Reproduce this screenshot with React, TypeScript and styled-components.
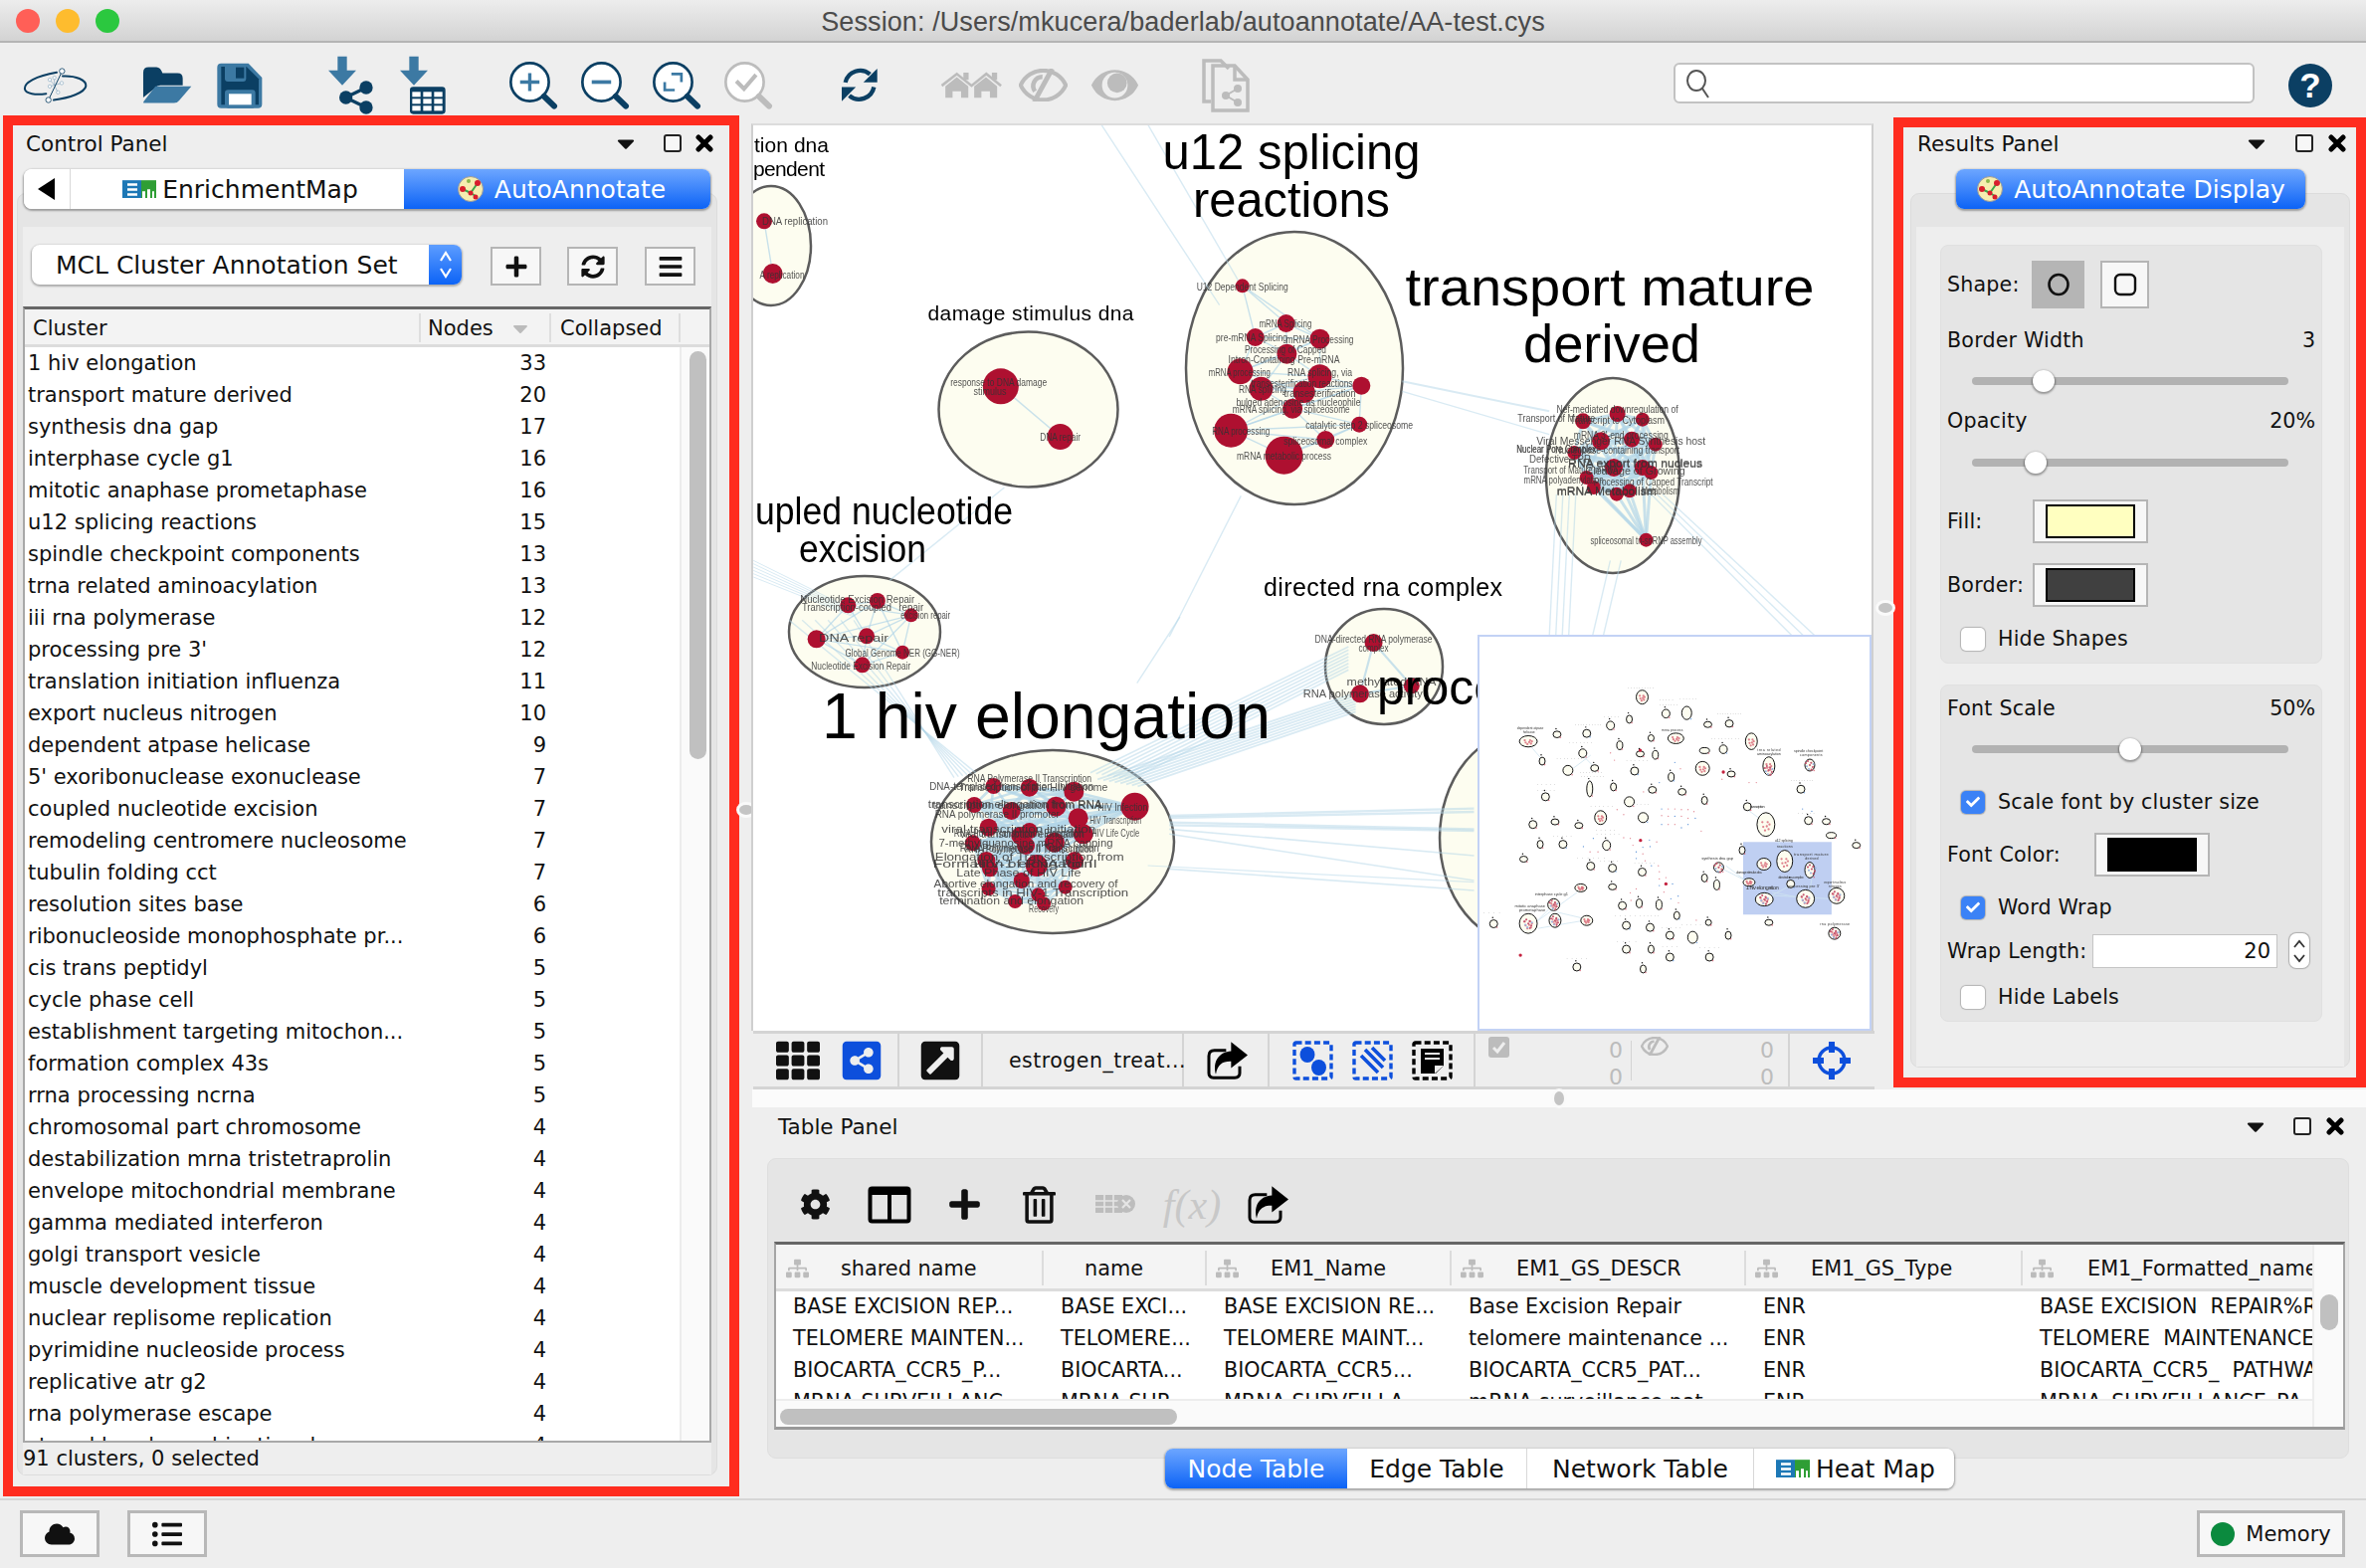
import React from "react";
import styled, { createGlobalStyle } from "styled-components";
import {
  FaCog, FaPlus, FaRegTrashAlt, FaSyncAlt, FaBars,
  FaCloud, FaListUl, FaTh, FaShareAltSquare, FaExternalLinkSquareAlt, FaSitemap, FaCaretDown, FaCheck,
} from "react-icons/fa";

const UI = '"DejaVu Sans", "Noto Sans", sans-serif';
const DARK = "#0b3f63";
const MID = "#3c79a3";
const GRAY = "#bcbcbc";
const BLUE = "#0d4fdc";

const Global = createGlobalStyle`
  html, body { margin: 0; padding: 0; background: #eeeeee; }
  body { font-family: ${UI}; color: #111; }
  * { box-sizing: border-box; }
`;

const Win = styled.div`
  width: 2378px; height: 1576px; display: flex; flex-direction: column;
  background: #eeeeee; overflow: hidden; font-size: 21px;
`;
const TitleBar = styled.div`
  height: 43px; flex: none; display: flex; align-items: center; position: relative;
  padding-left: 16px; gap: 16px;
  background: linear-gradient(#ededed, #d3d3d3); border-bottom: 2px solid #b4b4b4;
`;
const Light = styled.span<{ $c: string }>`
  width: 24px; height: 24px; border-radius: 50%; background: ${(p) => p.$c}; flex: none;
`;
const TitleText = styled.div`
  position: absolute; left: 0; right: 0; top: 7px; text-align: center;
  font: 27px "Liberation Sans", sans-serif; color: #4b4b4b; letter-spacing: 0.1px;
`;
const Toolbar = styled.div`
  height: 73px; flex: none; display: flex; align-items: center; padding-top: 12px;
`;
const ToolSlot = styled.div<{ $ml: number }>`
  margin-left: ${(p) => p.$ml}px; display: flex; align-items: center; flex: none;
`;
const SearchBox = styled.div`
  margin-left: 425px; width: 584px; height: 41px; background: #fff; border: 2px solid #c2c2c2;
  border-radius: 6px; display: flex; align-items: center; padding-left: 10px; margin-top: -4px;
`;
const HelpBadge = styled.div`
  margin-left: 34px; width: 44px; height: 44px; border-radius: 50%; background: ${DARK}; color: #fff;
  font: bold 35px "Liberation Sans", sans-serif; display: flex; align-items: center; justify-content: center;
`;

const Main = styled.div`
  height: 1390px; flex: none; display: flex;
`;
const RedFrame = styled.section<{ $w: number; $h: number; $mt: number; $ml: number }>`
  width: ${(p) => p.$w}px; height: ${(p) => p.$h}px; margin-top: ${(p) => p.$mt}px; margin-left: ${(p) => p.$ml}px;
  border: 10px solid #ff2c1f; flex: none; display: flex; flex-direction: column; background: #eeeeee;
`;
const PanelHead = styled.div<{ $h: number; $pl: number; $pr: number }>`
  height: ${(p) => p.$h}px; padding: 0 ${(p) => p.$pr}px 0 ${(p) => p.$pl}px; display: flex; align-items: center; flex: none;
`;
const PanelTitle = styled.span`
  font-size: 21.5px; margin-right: auto; white-space: nowrap;
`;
const HeadBtn = styled.span<{ $ml: number }>`
  margin-left: ${(p) => p.$ml}px; display: flex; align-items: center; justify-content: center; flex: none;
`;
const SquareGlyph = styled.span`
  width: 18px; height: 18px; border: 2px solid #222; border-radius: 3px; background: #f7f7f7;
`;
const Segments = styled.div<{ $w: number; $ml: number; $mt: number }>`
  position: relative; z-index: 1; flex: none; display: flex;
  width: ${(p) => p.$w}px; height: 40px; margin: ${(p) => p.$mt}px 0 -16px ${(p) => p.$ml}px;
  border-radius: 8px; background: #fff; overflow: hidden; box-shadow: 0 1px 2px 1px rgba(0, 0, 0, 0.32);
`;
const Segment = styled.div<{ $w: number; $on?: boolean; $line?: boolean; $gap?: number; $pl?: number }>`
  width: ${(p) => p.$w}px; flex: none; display: flex; align-items: center; justify-content: center; gap: ${(p) => p.$gap ?? 6}px;
  padding-left: ${(p) => p.$pl ?? 0}px; font-size: 25px; white-space: nowrap;
  color: ${(p) => (p.$on ? "#fff" : "#111")};
  background: ${(p) => (p.$on ? "linear-gradient(#6da6ff, #0c63f6)" : "#fff")};
  border-right: ${(p) => (p.$line ? "1px solid #d8d8d8" : "none")};
`;
const OuterBox = styled.div<{ $ml: number; $w: number; $h: number }>`
  margin-left: ${(p) => p.$ml}px; width: ${(p) => p.$w}px; height: ${(p) => p.$h}px; flex: none;
  background: #e5e5e5; border: 1px solid #dcdcdc; border-radius: 9px; padding: 33px 5px 0 5px;
`;
const InnerLight = styled.div`
  height: 100%; background: #eeeeee; display: flex; flex-direction: column;
`;
const ComboRow = styled.div`
  height: 80px; flex: none; padding: 18px 0 0 9px; display: flex; align-items: flex-start;
`;
const Combo = styled.div`
  width: 432px; height: 40px; border-radius: 8px; background: #fff; display: flex; overflow: hidden; flex: none;
  box-shadow: 0 1px 2px 1px rgba(0, 0, 0, 0.28); font-size: 25px;
`;
const ComboText = styled.div`
  flex: 1; padding-left: 24px; display: flex; align-items: center; white-space: nowrap;
`;
const ComboArrows = styled.div`
  width: 33px; background: linear-gradient(#5d9dff, #0c63f6); display: flex; align-items: center; justify-content: center;
`;
const SmallBtn = styled.div<{ $ml: number }>`
  margin: 2px 0 0 ${(p) => p.$ml}px; width: 51px; height: 39px; background: #f7f7f7; border: 2px solid #b5b5b5;
  display: flex; align-items: center; justify-content: center; flex: none;
`;
const ClusterTable = styled.div`
  height: 1142px; flex: none; display: flex; flex-direction: column; background: #fff;
  border: 2px solid #a8a8a8; border-top: 3px solid #666;
`;
const ClusterHead = styled.div`
  height: 38px; flex: none; display: flex; background: #f3f3f3; border-bottom: 3px solid #dcdcdc;
`;
const HeadCell = styled.div<{ $w: number; $line?: boolean; $pl: number }>`
  width: ${(p) => p.$w}px; flex: none; display: flex; align-items: center; padding-left: ${(p) => p.$pl}px; gap: 15px; font-size: 21px;
  margin: 4px 0 2px; border-right: ${(p) => (p.$line ? "2px solid #dedede" : "none")};
`;
const ClusterBody = styled.div`
  flex: 1; display: flex; overflow: hidden;
`;
const ClusterRows = styled.div`
  width: 658px; flex: none; overflow: hidden;
`;
const ClusterRow = styled.div`
  height: 32px; display: flex; align-items: center; white-space: nowrap;
`;
const ClusterName = styled.span`
  width: 470px; padding-left: 3px; flex: none; overflow: hidden;
`;
const ClusterCount = styled.span`
  width: 54px; text-align: right; flex: none;
`;
const VScrollTrack = styled.div`
  flex: 1; background: #fafafa; border-left: 2px solid #ececec; padding: 4px 0 0 8px;
`;
const VThumb = styled.div<{ $w: number; $h: number }>`
  width: ${(p) => p.$w}px; height: ${(p) => p.$h}px; background: #c0c0c0; border-radius: 9px;
`;
const Footnote = styled.div`
  flex: 1; display: flex; align-items: center; padding-left: 0;
`;

const Center = styled.div`
  width: 1160px; flex: none; padding: 8px 20px 0 12px; position: relative; display: flex; flex-direction: column;
`;
const CanvasBox = styled.div`
  height: 912px; flex: none; position: relative; overflow: hidden; background: #fff;
  border-top: 2px solid #dcdcdc; border-left: 2px solid #cfcfcf; border-right: 2px solid #cfcfcf;
`;
const Minimap = styled.div`
  position: absolute; right: 0; bottom: 0; width: 396px; height: 398px; background: #fff; border: 2px solid #c3d2f5;
`;
const SplitDot = styled.div<{ $x: number; $y: number; $wide?: boolean }>`
  position: absolute; left: ${(p) => p.$x}px; top: ${(p) => p.$y}px;
  width: ${(p) => (p.$wide ? 10 : 14)}px; height: ${(p) => (p.$wide ? 14 : 10)}px; border-radius: 50%;
  background: #c4c4c4; box-shadow: 0 0 0 3px #fafafa;
`;
const NetBar = styled.div`
  height: 59px; flex: none; display: flex; margin-left: 2px; width: 1127px;
  border-top: 3px solid #d4d4d4; border-bottom: 3px solid #d4d4d4;
`;
const NetSection = styled.div<{ $w: number; $pl: number; $line?: boolean; $gap?: number }>`
  width: ${(p) => p.$w}px; flex: none; display: flex; align-items: center; padding-left: ${(p) => p.$pl}px;
  gap: ${(p) => p.$gap ?? 0}px; border-right: ${(p) => (p.$line ? "2px solid #d4d4d4" : "none")}; white-space: nowrap;
`;
const NetName = styled.span`
  font-size: 20.5px; letter-spacing: 0.5px;
`;
const CountCol = styled.div`
  display: flex; flex-direction: column; width: 28px; margin-left: auto; color: ${GRAY}; font-size: 22px;
  line-height: 27px; text-align: right;
`;
const ThinDivider = styled.span`
  width: 1px; height: 40px; background: #d4d4d4; margin: 0 9px 0 8px; flex: none;
`;
const TopStack = styled.div`
  display: flex; flex: none; height: 979px; margin: 0;
`;
const RightArea = styled.div`
  width: 1635px; flex: none; display: flex; flex-direction: column;
`;
const StatCell = styled.div<{ $w: number }>`
  display: flex; align-items: flex-start; width: ${(p) => p.$w}px; align-self: stretch; padding-top: 3px;
`;
const Strip = styled.div`
  height: 18px; flex: none; margin-left: 13px; background: #fbfbfb; position: relative;
`;
const ResultsInnerPad = styled.div`
  padding: 18px 0 0 24px; height: 100%;
`;
const Group = styled.div<{ $h: number; $mt?: number; $pt: number }>`
  width: 384px; height: ${(p) => p.$h}px; margin-top: ${(p) => p.$mt ?? 0}px; padding: ${(p) => p.$pt}px 6px 0 6px;
  background: #e5e5e5; border-radius: 8px; border: 1px solid #e0e0e0; display: flex; flex-direction: column;
`;
const Row = styled.div<{ $h: number; $mt?: number }>`
  height: ${(p) => p.$h}px; margin-top: ${(p) => p.$mt ?? 0}px; flex: none; display: flex; align-items: center; white-space: nowrap;
`;
const RowLabel = styled.span<{ $w?: number }>`
  width: ${(p) => (p.$w ? `${p.$w}px` : "auto")}; flex: none; letter-spacing: 0.2px; font-size: 20.6px;
`;
const RowValue = styled.span`
  margin-left: auto; font-size: 20.6px;
`;
const ShapeBtn = styled.div<{ $on?: boolean; $ml?: number; $w: number }>`
  width: ${(p) => p.$w}px; height: 48px; margin-left: ${(p) => p.$ml ?? 0}px; flex: none; display: flex; align-items: center; justify-content: center;
  background: ${(p) => (p.$on ? "#b5b5b5" : "#f7f7f7")}; border: ${(p) => (p.$on ? "none" : "2px solid #b5b5b5")};
`;
const SliderTrack = styled.div`
  width: 318px; height: 8px; margin-left: 25px; background: #b2b2b2; border-radius: 4px; position: relative;
`;
const SliderThumb = styled.div<{ $pct: number }>`
  position: absolute; left: ${(p) => p.$pct}%; top: -7px; width: 22px; height: 22px; margin-left: -11px; border-radius: 50%;
  background: #fff; box-shadow: 0 1px 2px 1px rgba(0, 0, 0, 0.35);
`;
const ColorBtn = styled.div`
  width: 116px; height: 44px; background: #f7f7f7; border: 2px solid #b5b5b5; display: flex; align-items: center; justify-content: center; flex: none;
`;
const Swatch = styled.div<{ $c: string; $ring?: boolean }>`
  width: 90px; height: 34px; background: ${(p) => p.$c}; border: ${(p) => (p.$ring ? "2px solid #000" : "none")};
`;
const Check = styled.div<{ $on?: boolean }>`
  width: 24px; height: 23px; margin: 0 13px 0 14px; border-radius: 5px; flex: none; display: flex; align-items: center; justify-content: center;
  background: ${(p) => (p.$on ? "#3b82f6" : "#fff")}; box-shadow: 0 0 1px 1px rgba(0, 0, 0, 0.22);
`;
const WrapInput = styled.div`
  width: 186px; height: 34px; margin-left: 5px; background: #fff; border: 1px solid #c4c4c4; text-align: right;
  padding-right: 6px; line-height: 32px; flex: none;
`;
const Spinner = styled.div`
  width: 20px; height: 35px; margin-left: 12px; background: #fff; border-radius: 7px; flex: none;
  box-shadow: 0 0 1px 1px rgba(0, 0, 0, 0.25); display: flex; align-items: center; justify-content: center;
`;

const TablePanel = styled.div`
  height: 393px; flex: none; padding-left: 28px;
`;
const TableBox = styled.div`
  width: 1590px; height: 302px; margin-top: 13px; background: #e5e5e5; border: 1px solid #dedede; border-radius: 9px;
  padding: 0 3px 0 6px; display: flex; flex-direction: column;
`;
const TableTools = styled.div`
  height: 83px; flex: none; display: flex; align-items: center; padding-top: 8px;
`;
const DataTable = styled.div`
  height: 189px; flex: none; background: #fff; border: 2px solid #a5a5a5; border-top: 3px solid #666; border-bottom: 3px solid #999;
  display: flex;
`;
const DataMain = styled.div`
  width: 1544px; flex: none; display: flex; flex-direction: column; overflow: hidden;
`;
const DataHead = styled.div`
  height: 47px; flex: none; display: flex; background: #f4f4f4; border-bottom: 3px solid #dcdcdc; padding: 6px 0 3px;
`;
const DataHeadCell = styled.div<{ $w: number; $pl: number; $line?: boolean }>`
  width: ${(p) => p.$w}px; flex: none; display: flex; align-items: center; position: relative; padding-left: ${(p) => p.$pl}px;
  white-space: nowrap; overflow: hidden; font-size: 20.8px; border-right: ${(p) => (p.$line ? "2px solid #dcdcdc" : "none")};
`;
const IconAt = styled.span<{ $x: number }>`
  position: absolute; left: ${(p) => p.$x}px; top: 50%; transform: translateY(-50%); display: flex;
`;
const DataRows = styled.div`
  height: 109px; flex: none; overflow: hidden; margin-top: -1px;
`;
const DataRow = styled.div`
  height: 32px; display: flex;
`;
const DataCell = styled.div<{ $w: number }>`
  width: ${(p) => p.$w}px; flex: none; padding-left: 17px; display: flex; align-items: center; white-space: pre; overflow: hidden; font-size: 20.7px;
`;
const HScroll = styled.div`
  flex: 1; background: #fafafa; padding: 8px 0 0 4px; border-top: 2px solid #ededed;
`;
const HThumb = styled.div`
  width: 399px; height: 16px; background: #c0c0c0; border-radius: 8px;
`;
const DataSide = styled.div`
  flex: 1; background: #fafafa; border-left: 2px solid #ededed; padding: 50px 0 0 6px;
`;
const TableTabs = styled.div`
  width: 793px; height: 40px; margin: 19px 0 0 393px; display: flex; flex: none; position: relative; z-index: 1; background: #fff;
  border-radius: 8px; overflow: hidden; box-shadow: 0 1px 2px 1px rgba(0, 0, 0, 0.3);
`;
const BottomBar = styled.div`
  height: 70px; flex: none; display: flex; align-items: flex-start; padding: 10px 21px 0 20px; border-top: 2px solid #d6d6d6;
`;
const FootBtn = styled.div<{ $ml?: number; $w: number }>`
  width: ${(p) => p.$w}px; height: 47px; margin-left: ${(p) => p.$ml ?? 0}px; flex: none; background: #f7f7f7; border: 3px solid #b8b8b8;
  display: flex; align-items: center; justify-content: center; gap: 11px; font-size: 21px;
`;
const GreenDot = styled.span`
  width: 24px; height: 24px; border-radius: 50%; background: #0b8a3e;
`;
const Spacer = styled.div`
  flex: 1;
`;
const SoftSvg = styled.svg`
  display: block; filter: blur(0.45px);
`;

/* ---------- toolbar drawings ---------- */
const Logo = () => (
  <svg width="65" height="37" viewBox="70 70 195 110">
    <path d="M172 87C110 98 72 118 76 138c3 13 32 18 64 13" fill="none" stroke={DARK} strokeWidth="6" strokeLinecap="round" />
    <path d="M190 98c40-2 72 12 70 30-3 20-50 36-97 42" fill="none" stroke={DARK} strokeWidth="6" strokeLinecap="round" />
    <g stroke="#6f97b3" strokeWidth="1.6" fill="#fff">
      <path d="M165 125l-14-16M165 125l-14 4M165 125l22-6M165 125l10 22M165 125l0-22" fill="none" />
      <circle cx="151" cy="109" r="5" /><circle cx="151" cy="129" r="5" /><circle cx="187" cy="119" r="5" />
      <circle cx="176" cy="147" r="5" /><circle cx="165" cy="103" r="5" />
    </g>
    <path d="M188 84L147 170" stroke={DARK} strokeWidth="3" />
    <circle cx="188" cy="83" r="8" fill="#fff" stroke={DARK} strokeWidth="2.5" />
    <circle cx="147" cy="170" r="8" fill="#fff" stroke={DARK} strokeWidth="2.5" />
  </svg>
);
const Folder = () => (
  <svg width="50" height="39" viewBox="425 66 155 120">
    <path d="M428 87q0-17 17-17h24q13 0 19 19h47q16 0 16 16v22h-70q-10 0-17 9l-36 29z" fill={DARK} />
    <path d="M466 130h112l-38 44q-6 8-16 8h-92q-6 0-2-6z" fill={MID} />
  </svg>
);
const Save = () => (
  <svg width="46" height="46" viewBox="652 58 138 138">
    <path d="M665 60h82l41 43v80q0 12-12 12H665q-12 0-12-12V72q0-12 12-12z" fill={MID} />
    <path d="M665 70h76l37 37v78H665z" fill={DARK} />
    <path d="M676 70h64v36q0 9-9 9h-46q-9 0-9-9z" fill={MID} />
    <rect x="709" y="72" width="25" height="33" fill={DARK} />
    <rect x="676" y="140" width="92" height="55" rx="10" fill={MID} />
    <rect x="688" y="152" width="68" height="33" fill="#fff" />
  </svg>
);
const ImportArrow = ({ x }: { x: number }) => (
  <path d={`M${x - 14} 40h28v42h28l-42 45-42-45h28z`} fill={MID} />
);
const ImportNet = () => (
  <svg width="47" height="60" viewBox="985 38 141 180">
    <ImportArrow x={1030} />
    <path d="M1102 134L1040 164L1102 194" fill="none" stroke={DARK} strokeWidth="10" />
    <circle cx="1102" cy="134" r="20" fill={DARK} /><circle cx="1041" cy="164" r="20" fill={DARK} /><circle cx="1102" cy="194" r="20" fill={DARK} />
  </svg>
);
const ImportTbl = () => (
  <svg width="47" height="60" viewBox="1200 38 141 180">
    <ImportArrow x={1245} />
    <rect x="1233" y="132" width="107" height="82" rx="10" fill={DARK} />
    {[0, 1, 2].flatMap((r) => [0, 1, 2].map((c) => (
      <rect key={`${r}${c}`} x={1240 + c * 33} y={147 + r * 21} width="25" height="15" fill="#fff" />
    )))}
  </svg>
);
const Lens = ({ c, kind }: { c: string; kind: string }) => {
  const inner = kind === "check" ? "#bcbcbc" : MID;
  return (
    <svg width="52" height="52" viewBox="30 48 155 155">
      <circle cx="97" cy="115" r="57" fill="#fff" stroke={c} strokeWidth="8" />
      <path d="M140 158L170 187" stroke={c} strokeWidth="18" strokeLinecap="round" />
      {kind === "plus" && <path d="M68 115h58M97 88v54" stroke={inner} strokeWidth="10" />}
      {kind === "minus" && <path d="M68 115h58" stroke={inner} strokeWidth="11" />}
      {kind === "fit" && <path d="M92 91h30v24M102 139H72v-24" fill="none" stroke={inner} strokeWidth="8" />}
      {kind === "check" && <path d="M72 112l23 23 36-42" fill="none" stroke={inner} strokeWidth="12" />}
    </svg>
  );
};
const Refresh = () => (
  <svg width="38" height="37" viewBox="1035 70 115 112">
    <path d="M1049 118A46 46 0 0 1 1124 93" fill="none" stroke={DARK} strokeWidth="13" />
    <path d="M1146 76v42h-42z" fill={DARK} />
    <path d="M1136 132A46 46 0 0 1 1061 158" fill="none" stroke={DARK} strokeWidth="13" />
    <path d="M1038 175v-43h43z" fill={DARK} />
  </svg>
);
const Houses = () => (
  <svg width="63" height="27" viewBox="1335 85 190 82">
    <path d="M1339 128L1385 92L1430 128L1475 92L1520 128" fill="none" stroke={GRAY} strokeWidth="8" />
    <path d="M1350 130l35-28 35 28v35h-22v-20h-26v20h-22zM1438 130l36-28 34 28v35h-22v-20h-26v20h-22z" fill={GRAY} />
    <rect x="1405" y="88" width="16" height="22" fill={GRAY} /><rect x="1492" y="88" width="16" height="22" fill={GRAY} />
  </svg>
);
const Eye = ({ size = 49, slash, c = GRAY }: { size?: number; slash?: boolean; c?: string }) => (
  <svg width={size} height={size * 0.68} viewBox="0 0 64 44">
    <path d="M2 22C14 -4 50 -4 62 22C50 48 14 48 2 22z" fill={slash ? "none" : c} stroke={c} strokeWidth={slash ? 5.5 : 2} />
    {!slash && <circle cx="32" cy="22" r="17" fill="#eee" />}
    {!slash && <circle cx="35" cy="19" r="13" fill={c} />}
    {slash && <path d="M20 44L44 0" stroke={c} strokeWidth="6.5" />}
    {slash && <path d="M31 11a12 12 0 0 0-10 19" fill="none" stroke={c} strokeWidth="6" />}
  </svg>
);
const DocShare = () => (
  <svg width="50" height="55" viewBox="0 0 50 55" fill="none" stroke={GRAY} strokeWidth="3.5">
    <path d="M10 44H3V3h17l8 8" />
    <path d="M12 8h22l13 14v31H12z" /><path d="M34 8v14h13" />
    <g fill={GRAY} stroke="none"><circle cx="37" cy="31" r="4" /><circle cx="25" cy="38" r="4" /><circle cx="37" cy="45" r="4" /></g>
    <path d="M37 31l-12 7 12 7" strokeWidth="2" />
  </svg>
);
const SearchGlyph = () => (
  <svg width="26" height="32" viewBox="0 0 26 32" fill="none" stroke="#555" strokeWidth="2">
    <ellipse cx="11" cy="13" rx="9" ry="10" /><path d="M17 21l6 9" />
  </svg>
);
const ExportIcon = () => (
  <svg width="41" height="38" viewBox="1362 18 123 113">
    <path d="M1420 44H1385q-17 0-17 17v51q0 14 14 14h64q15 0 15-14V92" fill="none" stroke="#000" strokeWidth="9" />
    <path d="M1435 18L1485 58L1435 97V77C1410 76 1394 86 1389 116C1378 76 1400 48 1435 46z" fill="#000" />
  </svg>
);
const ColumnsIcon = () => (
  <svg width="44" height="38" viewBox="0 0 44 38" fill="none" stroke="#000">
    <rect x="2.5" y="2.5" width="39" height="33" rx="2" strokeWidth="4" />
    <path d="M2 6h40" strokeWidth="6" /><path d="M22 4v32" strokeWidth="4" />
  </svg>
);
const CloseGlyph = () => (
  <svg width="18" height="18" viewBox="0 0 18 18"><path d="M3 3L15 15M15 3L3 15" stroke="#000" strokeWidth="5" strokeLinecap="round" /></svg>
);

/* ---------- small product marks ---------- */
const EmMark = ({ w = 34 }: { w?: number }) => (
  <svg width={w} height={w * 0.54} viewBox="0 0 34 18">
    <rect width="19" height="18" fill="#1d78b6" /><rect x="19" width="15" height="18" fill="#2f9e35" />
    <path d="M5 3h10v2.5H5zM5 8h10v2.5H5zM5 13h10v2.5H5z" fill="#fff" />
    <path d="M20 11h3v7h-3zM25 9h3v9h-3zM30 11h2v7h-2z" fill="#fff" />
  </svg>
);
const AaMark = () => (
  <svg width="28" height="28" viewBox="0 0 28 28">
    <circle cx="14" cy="14" r="12.5" fill="#f6edb0" stroke="#999" />
    <path d="M6 14L14 18L21 8M14 18L19 21" stroke="#3aa84a" strokeWidth="2" fill="none" />
    <circle cx="6" cy="14" r="3" fill="#d81e2c" /><circle cx="21" cy="8" r="3" fill="#d81e2c" />
    <circle cx="14" cy="18" r="2.5" fill="#d81e2c" /><circle cx="19" cy="22" r="2.5" fill="#d81e2c" /><circle cx="12" cy="6" r="2" fill="#8bb84a" />
  </svg>
);
const WindowControls = ({ a, b, c }: { a: number; b: number; c: number }) => (
  <>
    <HeadBtn $ml={a}><FaCaretDown size={28} color="#111" style={{ margin: "-2px -6px" }} /></HeadBtn>
    <HeadBtn $ml={b}><SquareGlyph /></HeadBtn>
    <HeadBtn $ml={c}><CloseGlyph /></HeadBtn>
  </>
);

/* ---------- network drawing ---------- */
const z4 = (x: number, y: number): [number, number] => [x / 1.3876 + 750, y / 3 + 120];
const z5 = (x: number, y: number): [number, number] => [x / 1.3876 + 750, y / 3 + 620];

const clusters: number[][] = [
  [775, 247, 40, 60], [1033.5, 411.5, 90, 78], [1301, 370, 109, 137], [1621, 478, 67, 98],
  [869, 635, 76, 56], [1391, 670, 59, 58], [1058, 846, 122, 92], [1535, 842, 88, 108],
];
const n4: number[][] = [
  [25, 307, 8], [37, 465, 10], [355, 805, 18], [438, 957, 13],
  [692, 502, 7], [753, 615, 9], [710, 657, 9], [800, 662, 10], [754, 707, 10], [689, 760, 13], [800, 775, 12],
  [718, 812, 12], [778, 822, 11], [858, 803, 9], [762, 872, 10], [676, 938, 17], [855, 920, 8], [808, 966, 9], [750, 1013, 19],
  [1167, 910, 8], [1215, 888, 8], [1250, 905, 7], [1192, 970, 9], [1235, 965, 8], [1268, 980, 7], [1155, 1005, 7], [1210, 1050, 9],
  [1250, 1050, 8], [1262, 1065, 7], [1172, 1080, 7], [1182, 1110, 7], [1214, 1130, 7], [1232, 1120, 7], [1255, 1268, 7],
  [142, 1465, 8], [183, 1452, 8], [230, 1495, 7],
];
const n5: number[][] = [
  [98, 67, 9], [168, 58, 8], [218, 107, 7], [162, 145, 8], [875, 78, 9], [928, 208, 8], [856, 232, 9],
  [345, 510, 8], [395, 515, 9], [457, 527, 10], [318, 567, 8], [432, 572, 10], [370, 585, 9], [542, 572, 14], [463, 607, 10],
  [338, 635, 9], [395, 645, 8], [382, 660, 9], [470, 655, 10], [430, 680, 10], [390, 690, 9], [316, 682, 8], [335, 735, 9],
  [405, 750, 11], [458, 735, 9], [340, 760, 8], [384, 795, 8], [338, 820, 7], [445, 815, 7], [407, 838, 7], [375, 858, 7], [415, 865, 7],
];
const allNodes = [
  ...n4.map((n) => [...z4(n[0], n[1]), n[2]]),
  ...n5.map((n) => [...z5(n[0], n[1]), n[2]]),
];
type Lab = [number, number, string, number];
const labs4: Lab[] = [
  [68, 307, "DNA replication", 66], [50, 467, "A replication", 45],
  [352, 792, "response to DNA damage", 97], [340, 820, "stimulus", 33], [438, 957, "DNA repair", 41],
  [692, 505, "U12 Dependent Splicing", 92], [752, 615, "mRNA Splicing", 53], [705, 657, "pre-mRNA Splicing", 72], [800, 663, "mRNA Processing", 68],
  [752, 693, "Processing of Capped", 82], [750, 722, "Intron-Containing Pre-mRNA", 112], [688, 762, "mRNA processing", 62], [800, 762, "RNA splicing, via", 65],
  [775, 795, "transesterification reactions", 102], [720, 812, "RNA splicing", 48], [800, 825, "transesterification", 72], [770, 852, "bulged adenosine as nucleophile", 125],
  [760, 873, "mRNA splicing, via spliceosome", 118], [690, 938, "RNA processing", 58], [855, 920, "catalytic step 2 spliceosome", 108], [808, 968, "spliceosomal complex", 84], [750, 1015, "mRNA metabolic process", 95],
  [1215, 872, "Nef-mediated downregulation of", 122], [1130, 900, "Transport of Mature", 78], [1215, 905, "Transcript to Cytoplasm", 95], [1220, 950, "mRNA 3'-end processing", 95], [1220, 968, "Viral Messenger RNA Synthesis host", 170],
  [1130, 992, "Nuclear Pore Complex", 80], [1130, 994, "Nuclear Pore Complex", 80], [1215, 997, "Nucleobase-containing transport", 125], [1135, 1022, "Defective TPR", 62], [1240, 1035, "RNA export from nucleus", 135], [1240, 1037, "RNA export from nucleus", 135], [1150, 1055, "Transport of Mature mRNA", 95],
  [1240, 1060, "Cleavage of Growing", 100], [1140, 1085, "mRNA polyadenylation", 80], [1265, 1092, "Processing of Capped Transcript", 120], [1200, 1118, "mRNA Metabolism", 100], [1200, 1121, "mRNA Metabolism", 100], [1275, 1120, "Metabolism", 38], [1255, 1270, "spliceosomal tri-snRNP assembly", 112],
  [155, 1445, "Nucleotide Excision Repair", 115], [140, 1470, "Transcription-coupled", 90], [250, 1495, "excision repair", 50], [230, 1470, "repair", 25],
];
const labs5: Lab[] = [
  [150, 62, "DNA repair", 70], [218, 108, "Global Genome NER (GG-NER)", 115], [160, 146, "Nucleotide Excision Repair", 100],
  [875, 66, "DNA-directed RNA polymerase", 118], [875, 94, "complex", 30], [900, 195, "methylated RNA", 90], [860, 232, "RNA polymerase activity", 120],
  [395, 485, "RNA Polymerase II Transcription", 125], [370, 510, "DNA-templated transcription, initiation", 165], [400, 512, "Transcription of the HIV genome", 150], [375, 565, "transcription elongation from RNA", 175], [378, 568, "transcription elongation from RNA", 170],
  [350, 595, "RNA polymerase II promoter", 125], [525, 573, "HIV Infection", 50], [515, 612, "HIV Transcription", 52], [515, 650, "HIV Life Cycle", 48], [380, 640, "viral transcription initiation", 155], [380, 650, "RNA Pol II Transcription Elongation", 130], [385, 655, "viral transcription elongation", 125],
  [390, 682, "7-methylguanosine mRNA capping", 175], [395, 697, "RNA Polymerase II Transcription", 140], [395, 700, "RNA Polymerase II Transcription", 130], [395, 722, "Elongation of Transcription from", 190], [375, 745, "Formation of RNA Pol II", 165], [400, 745, "HIV-1 elongation", 120], [380, 770, "Late Phase of HIV Life", 125],
  [390, 805, "Abortive elongation and recovery of", 185], [400, 832, "transcripts in HIV-1 Transcription", 192], [370, 855, "termination and elongation", 145], [415, 880, "Recovery", 30],
];

const Network = () => {
  const edges: [number, number, number, number, number, number][] = [];
  const e4 = (a: number, b: number, c: number, d: number, w = 1.4) => { const p = z4(a, b), q = z4(c, d); edges.push([p[0], p[1], q[0], q[1], w, 0.5]); };
  const e5 = (a: number, b: number, c: number, d: number, w = 1.4) => { const p = z5(a, b), q = z5(c, d); edges.push([p[0], p[1], q[0], q[1], w, 0.5]); };
  e4(495, 15, 660, 560); e4(560, 15, 690, 500); e4(915, 790, 1120, 880, 2); e4(915, 820, 1120, 950); e4(360, 1110, 200, 1390); e4(690, 1135, 590, 1560); e5(605, 0, 545, 200);
  for (let i = 0; i < 4; i++) e4(1130 + i * 9, 1130, 1120 + i * 9, 1560);
  e4(1205, 1330, 1180, 1560); e4(1220, 1330, 1195, 1560);
  for (let i = 0; i < 3; i++) e4(1262 + i * 8, 1130, 1460 + i * 16, 1560);
  for (let i = 0; i < 6; i++) { e4(10, 1330 + i * 10, 150, 1480 + i * 4, 1); e5(60 + i * 18, 10, 320 - i * 6, 470 + i * 3, 1.4); }
  for (let i = 0; i < 8; i++) { e5(480 + i * 8, 470 + i * 3, 840, 90 + i * 10, 1.6); e5(490 + i * 8, 490 + i * 3, 850, 230 + i * 8, 1.8); }
  e5(590, 600, 1015, 578, 2.4); e5(590, 606, 1015, 588, 2.4); e5(590, 620, 1015, 640, 2.4); e5(590, 628, 1015, 645, 2.4); e5(590, 640, 1015, 720, 1.6); e5(590, 655, 1015, 795, 1.6); e5(590, 760, 1015, 825, 1.6); e5(560, 750, 1015, 800, 1.2);
  const groups: number[][] = [[0, 2, 3, 1.4], [2, 4, 3, 1.6], [4, 19, 4, 1.4], [19, 34, 8, 3], [34, 41, 5, 1.4], [41, 44, 3, 2.2], [44, 69, 9, 2.6]];
  groups.forEach(([a, b, reach, w]) => {
    for (let i = a; i < b; i++) for (let j = i + 1; j < Math.min(b, i + reach); j++) {
      const p = allNodes[i], q = allNodes[j];
      edges.push([p[0], p[1], q[0], q[1], w, 0.7]);
    }
  });
  return (
    <SoftSvg width="1124" height="910" viewBox="757 126 1124 910" fontFamily='"Liberation Sans", sans-serif'>
      {clusters.map((c, i) => (
        <ellipse key={i} cx={c[0]} cy={c[1]} rx={c[2]} ry={c[3]} fill="#fdfdf0" stroke="#5c5c5c" strokeWidth="2.5" />
      ))}
      {edges.map((e, i) => (
        <line key={i} x1={e[0]} y1={e[1]} x2={e[2]} y2={e[3]} stroke="#b3d6e8" strokeWidth={e[4]} opacity={e[5]} />
      ))}
      {allNodes.map((n, i) => <circle key={i} cx={n[0]} cy={n[1]} r={n[2]} fill="#ae1030" />)}
      <g fill="#333" fontSize="10.5" textAnchor="middle" opacity="0.85">
        {labs4.map((l, i) => { const p = z4(l[0], l[1]); return <text key={i} x={p[0]} y={p[1] + 4} textLength={l[3]} lengthAdjust="spacingAndGlyphs">{l[2]}</text>; })}
        {labs5.map((l, i) => { const p = z5(l[0], l[1]); return <text key={i} x={p[0]} y={p[1] + 4} textLength={l[3]} lengthAdjust="spacingAndGlyphs">{l[2]}</text>; })}
      </g>
      <g fill="#000">
        <text x="1298" y="170" fontSize="50" textAnchor="middle" textLength="259" lengthAdjust="spacingAndGlyphs">u12 splicing</text>
        <text x="1298" y="218" fontSize="50" textAnchor="middle" textLength="198" lengthAdjust="spacingAndGlyphs">reactions</text>
        <text x="1618" y="307" fontSize="54" textAnchor="middle" textLength="411" lengthAdjust="spacingAndGlyphs">transport mature</text>
        <text x="1620" y="364" fontSize="54" textAnchor="middle" textLength="178" lengthAdjust="spacingAndGlyphs">derived</text>
        <text x="1036" y="322" fontSize="21" textAnchor="middle" textLength="207" lengthAdjust="spacing">damage stimulus dna</text>
        <text x="759" y="527" fontSize="38" textLength="259" lengthAdjust="spacingAndGlyphs">upled nucleotide</text>
        <text x="867" y="565" fontSize="38" textAnchor="middle" textLength="128" lengthAdjust="spacingAndGlyphs">excision</text>
        <text x="1390" y="599" fontSize="25" textAnchor="middle" textLength="240" lengthAdjust="spacing">directed rna complex</text>
        <text x="826" y="742" fontSize="64" textLength="451" lengthAdjust="spacingAndGlyphs">1 hiv elongation</text>
        <text x="1384" y="708" fontSize="50">proce</text>
        <text x="758" y="153" fontSize="21" textLength="75" lengthAdjust="spacing">tion dna</text>
        <text x="757" y="177" fontSize="21" textLength="72" lengthAdjust="spacing">pendent</text>
      </g>
    </SoftSvg>
  );
};

/* ---------- overview map ---------- */
const mini: number[][] = [
  [496,179,18,21],[568,229,12,13],[631,227,15,20],[695,262,12,9],[760,259,12,11],[457,246,9,12],[400,265,12,13],[328,289,12,12],[238,292,12,10],[151,313,27,17],
  [523,303,9,10],[428,325,9,13],[598,304,24,16],[827,313,18,25],[490,351,12,9],[536,354,9,13],[685,341,15,9],[742,337,12,13],[316,349,12,13],[193,373,9,12],
  [352,394,12,10],[271,401,15,15],[473,403,12,12],[679,395,21,21],[766,412,12,9],[880,388,18,28],[1004,385,15,18],[584,421,9,13],[337,457,9,24],[409,451,9,12],
  [527,460,12,10],[617,466,12,10],[977,458,12,12],[203,481,12,12],[457,496,15,15],[685,492,9,12],[815,511,12,12],[499,544,15,15],[370,544,18,21],[165,565,12,12],
  [232,557,12,9],[304,568,12,9],[871,565,27,36],[1000,553,12,12],[1054,556,12,9],[1069,598,15,9],[187,625,9,12],[256,625,12,12],[388,628,12,15],[137,670,12,9],
  [1145,628,12,9],[340,691,12,12],[406,697,12,12],[496,709,12,12],[728,695,15,15],[799,643,9,12],[865,685,21,18],[928,676,24,33],[1004,703,15,24],[685,727,9,12],
  [722,748,9,15],[820,740,18,12],[946,745,12,12],[310,757,18,12],[406,754,12,9],[1085,781,24,24],[866,792,27,20],[991,790,27,27],[436,811,12,12],[487,804,9,13],
  [547,808,9,15],[228,808,18,18],[601,841,9,12],[151,865,27,30],[232,856,18,21],[328,856,18,15],[46,866,12,12],[448,871,12,12],[520,877,12,12],[697,862,9,9],
  [880,862,12,9],[580,901,12,12],[649,907,15,18],[757,901,9,12],[1079,895,18,18],[448,943,12,12],[523,943,9,12],[580,967,12,12],[700,967,12,12],[298,997,12,12],[499,1003,9,12],
];
const loose: number[][] = [
  [555,518,0],[575,518,1],[595,518,1],[615,520,1],[635,520,1],[653,526,1],[555,538,1],[575,540,1],[595,540,0],[615,540,1],[635,546,1],[657,546,0],
  [555,565,0],[575,565,1],[595,565,1],[615,575,0],[635,565,0],[675,585,1],[440,605,1],[460,607,1],[491,613,2],[518,612,0],[540,618,1],[348,607,0],[318,632,0],
  [468,628,1],[498,634,0],[520,632,0],[338,648,1],[362,648,1],[478,648,0],[498,654,1],[478,668,0],[505,675,1],[524,690,0],[545,690,1],[548,708,1],[548,730,1],[568,726,1],
  [548,750,0],[568,745,2],[588,745,0],[583,790,0],[605,782,0],[606,802,1],[460,772,1],[478,760,1],[462,795,1],[562,770,1],[660,855,1],[742,406,2],[738,428,1],[820,438,1],[842,438,1],
  [440,535,1],[420,520,1],[500,466,1],[548,438,0],[595,377,0],[612,396,1],[400,348,1],[412,370,1],[490,340,2],[127,961,2],[982,518,0],[1010,525,0],
];
const miniLabels: [number, number, string, number, number][] = [
  [860, 762, "1 hiv elongation", 100, 18], [925, 618, "u12 splicing", 55, 11], [928, 636, "reactions", 48, 11], [1008, 659, "transport mature", 105, 12], [1010, 672, "derived", 40, 11],
  [724, 672, "synthesis dna gap", 96, 12], [986, 755, "processing pre 3'", 95, 12], [221, 779, "interphase cycle g1", 100, 12], [156, 815, "mitotic anaphase", 92, 12], [163, 828, "prometaphase", 80, 12],
  [880, 342, "trna related", 70, 11], [880, 355, "aminoacylation", 72, 11], [1000, 345, "spindle checkpoint", 88, 11], [1008, 359, "components", 68, 11], [1080, 869, "rna polymerase", 90, 11],
  [157, 275, "dependent atpase", 80, 10], [153, 287, "helicase", 36, 10], [587, 281, "mrna process", 64, 10], [1080, 744, "export nucleus", 66, 10], [1080, 756, "nitrogen", 38, 10],
  [845, 515, "transcription", 45, 12], [820, 715, "damage stimulus dna", 76, 10], [947, 730, "directed rna complex", 76, 10],
  [492, 155, "· · · · · · · · · ·", 78, 10], [760, 235, "· · · · · · · · · ·", 74, 10], [332, 268, "· · · · · · · · · ·", 80, 10], [980, 436, "· · · · · · · · ·", 68, 10],
  [569, 192, "· · · · ·", 42, 10], [576, 207, "· · · · · · ·", 54, 10], [635, 190, "· · · · · ·", 50, 10], [403, 244, "· · · · ·", 45, 10], [309, 322, "· · · · · · ·", 70, 10], [276, 369, "· · · · · · · ·", 78, 10],
  [341, 412, "· · · · · · · ·", 66, 10], [345, 424, "· · · · · · · ·", 70, 10], [205, 448, "· · · · ·", 55, 10], [205, 465, "· · · · ·", 52, 10], [480, 376, "· · · · · ·", 64, 10], [748, 310, "· · · · · · · · ·", 86, 10],
  [373, 516, "· · · · · ·", 68, 10], [492, 508, "· · · · ·", 50, 10], [385, 586, "· · · · ·", 58, 10], [392, 598, "· · · · · ·", 70, 10], [254, 604, "· · · · ·", 56, 10], [340, 670, "· · · · · ·", 85, 10],
  [395, 681, "· · · · ·", 55, 10], [503, 688, "· · · · · ·", 62, 10], [40, 838, "· · · ·", 50, 10], [445, 845, "· · · · ·", 65, 10], [518, 845, "· · · · · ·", 58, 10], [584, 881, "· · · · ·", 58, 10],
  [645, 874, "· · · · ·", 58, 10], [448, 925, "· · · ·", 60, 10], [580, 941, "· · · ·", 48, 10], [700, 944, "· · · · ·", 62, 10], [298, 975, "· · · · ·", 62, 10], [993, 536, "· · · · ·", 50, 10],
];
const MiniMap = () => (
  <SoftSvg width="392" height="394" viewBox="3 -4 1182 1188" fontFamily='"Liberation Sans", sans-serif'>
    <rect x="802" y="618" width="268" height="220" fill="#bfcff2" />
    <g stroke="#cfe4f0" strokeWidth="3" opacity="0.8">
      <path d="M175 860L300 770M175 860L225 810M180 880L325 855M235 830L320 850M815 520L870 560M740 700L820 740M750 690L810 735M160 330L190 365M320 360L350 390M340 355L280 400M890 770L990 790M890 780L1060 790M945 750L870 790M1010 730L1000 790M905 610L940 680" />
    </g>
    {mini.map((m, i) => (
      <ellipse key={i} cx={m[0]} cy={m[1]} rx={m[2]} ry={m[3]} fill="#fdfdf0" stroke="#111" strokeWidth="3" />
    ))}
    {mini.map((m, i) => {
      const many = m[2] >= 18;
      const pts = many ? [[-0.3, 0.2], [0.2, -0.2], [0.3, 0.4], [-0.1, 0.5], [0.4, 0], [-0.4, -0.2], [0.1, 0.15]] : [[0.85, 0.9]];
      return pts.map((p, j) => (
        <circle key={`${i}-${j}`} cx={m[0] + p[0] * m[2]} cy={m[1] + p[1] * m[3]} r={many ? 3.4 : 2.4} fill={i % 5 === 2 && !many ? "#5f95d8" : "#d45a6c"} opacity="0.75" />
      ));
    })}
    {[[151,865],[228,808],[232,856],[866,792],[1085,781],[991,790],[728,695],[1010,700],[880,400],[1004,385],[1079,895]].map((c, i) =>
      [[-9,4],[4,-7],[9,6],[-3,12],[0,0],[-12,-6],[11,-3],[5,14],[-6,-12]].map((d, j) => (
        <circle key={`c${i}-${j}`} cx={c[0] + d[0]} cy={c[1] + d[1]} r="3.2" fill={j % 3 ? "#c45570" : "#9db4de"} />
      ))
    )}
    {loose.map((l, i) => (
      <circle key={i} cx={l[0]} cy={l[1]} r={l[2] === 2 ? 5 : 2} fill={l[2] === 0 ? "#5f95d8" : l[2] === 2 ? "#c4213e" : "#e28a95"} />
    ))}
    <g textAnchor="middle" fill="#333">
      {miniLabels.map((l, i) => (
        <text key={i} x={l[0]} y={l[1]} fontSize={l[4]} textLength={l[3]} lengthAdjust="spacing">{l[2]}</text>
      ))}
    </g>
    <g fill="#111">
      {mini.filter((m) => m[2] <= 12).map((m, i) => (
        <circle key={i} cx={m[0] - 3} cy={m[1] - m[3] - 7} r="2.2" />
      ))}
    </g>
  </SoftSvg>
);

/* ---------- canvas toolbar drawings ---------- */
const DashedBox = ({ c, children }: { c: string; children: React.ReactNode }) => (
  <svg width="41" height="40" viewBox="0 0 41 40">
    <rect x="2" y="2" width="37" height="36" rx="1.5" fill="none" stroke={c} strokeWidth="3.4" strokeDasharray="6 3.2" />
    {children}
  </svg>
);
const TargetIcon = () => (
  <svg width="38" height="38" viewBox="0 0 38 38" fill="none" stroke={BLUE}>
    <circle cx="19" cy="19" r="13" strokeWidth="3.4" />
    <path d="M19 0v11M19 27v11M0 19h11M27 19h11" strokeWidth="6" />
  </svg>
);
const CheckTile = () => (
  <svg width="21" height="21" viewBox="0 0 21 21">
    <rect width="21" height="21" rx="3" fill={GRAY} />
    <path d="M5 11l4 4 7-9" fill="none" stroke="#eee" strokeWidth="3" />
  </svg>
);
const ComboChevrons = () => (
  <svg width="16" height="30" viewBox="0 0 16 30" fill="none" stroke="#fff" strokeWidth="2.2">
    <path d="M3 11L8 3l5 8M3 19l5 8 5-8" />
  </svg>
);
const MiniTable = () => (
  <svg width="41" height="19" viewBox="0 0 41 19">
    <g fill="#bdbdbd"><rect width="27" height="18" /></g>
    <path d="M9 0v18M18 0v18M0 6h27M0 12h27" stroke="#e5e5e5" strokeWidth="1.6" />
    <circle cx="31" cy="9" r="9" fill="#bdbdbd" /><path d="M27 5l8 8M35 5l-8 8" stroke="#e5e5e5" strokeWidth="2.2" />
  </svg>
);
const ToolPlace = styled.span<{ $w: number; $ml: number }>`
  width: ${(p) => p.$w}px; margin-left: ${(p) => p.$ml}px; display: flex; align-items: center; justify-content: center; flex: none;
`;
const FxGlyph = styled.span`
  font: italic 42px "Liberation Serif", serif; color: #c8c8c8; white-space: nowrap;
`;
const StatGlyph = styled.span`
  flex: none; display: flex;
`;

/* ---------- data ---------- */
const clusterRows: [string, number][] = [
  ["1 hiv elongation", 33], ["transport mature derived", 20], ["synthesis dna gap", 17], ["interphase cycle g1", 16],
  ["mitotic anaphase prometaphase", 16], ["u12 splicing reactions", 15], ["spindle checkpoint components", 13], ["trna related aminoacylation", 13],
  ["iii rna polymerase", 12], ["processing pre 3'", 12], ["translation initiation influenza", 11], ["export nucleus nitrogen", 10],
  ["dependent atpase helicase", 9], ["5' exoribonuclease exonuclease", 7], ["coupled nucleotide excision", 7], ["remodeling centromere nucleosome", 7],
  ["tubulin folding cct", 7], ["resolution sites base", 6], ["ribonucleoside monophosphate pr...", 6], ["cis trans peptidyl", 5],
  ["cycle phase cell", 5], ["establishment targeting mitochon...", 5], ["formation complex 43s", 5], ["rrna processing ncrna", 5],
  ["chromosomal part chromosome", 4], ["destabilization mrna tristetraprolin", 4], ["envelope mitochondrial membrane", 4], ["gamma mediated interferon", 4],
  ["golgi transport vesicle", 4], ["muscle development tissue", 4], ["nuclear replisome replication", 4], ["pyrimidine nucleoside process", 4],
  ["replicative atr g2", 4], ["rna polymerase escape", 4], ["strand break combinational", 4],
];
const colW = [269, 164, 246, 296, 278, 291];
const headCols: [string, number, number | null][] = [
  ["shared name", 65, 10], ["name", 41, null], ["EM1_Name", 64, 9], ["EM1_GS_DESCR", 65, 9], ["EM1_GS_Type", 65, 9], ["EM1_Formatted_name", 65, 8],
];
const dataRows = [
  ["BASE EXCISION REP...", "BASE EXCI...", "BASE EXCISION RE...", "Base Excision Repair", "ENR", "BASE EXCISION  REPAIR%R"],
  ["TELOMERE MAINTEN...", "TELOMERE...", "TELOMERE MAINT...", "telomere maintenance ...", "ENR", "TELOMERE  MAINTENANCE"],
  ["BIOCARTA_CCR5_P...", "BIOCARTA...", "BIOCARTA_CCR5...", "BIOCARTA_CCR5_PAT...", "ENR", "BIOCARTA_CCR5_  PATHWAY"],
  ["MRNA SURVEILLANC...", "MRNA SUR...", "MRNA SURVEILLA...", "mRNA surveillance pat...", "ENR", "MRNA_SURVEILLANCE_PA"],
];

export default function App() {
  return (
    <Win>
      <Global />
      <TitleBar>
        <Light $c="#ff5f57" /><Light $c="#febc2e" /><Light $c="#2bc83f" />
        <TitleText>Session: /Users/mkucera/baderlab/autoannotate/AA-test.cys</TitleText>
      </TitleBar>
      <Toolbar>
        <ToolSlot $ml={23}><Logo /></ToolSlot>
        <ToolSlot $ml={55}><Folder /></ToolSlot>
        <ToolSlot $ml={25}><Save /></ToolSlot>
        <ToolSlot $ml={65}><ImportNet /></ToolSlot>
        <ToolSlot $ml={25}><ImportTbl /></ToolSlot>
        <ToolSlot $ml={62}><Lens c={DARK} kind="plus" /></ToolSlot>
        <ToolSlot $ml={20}><Lens c={DARK} kind="minus" /></ToolSlot>
        <ToolSlot $ml={20}><Lens c={DARK} kind="fit" /></ToolSlot>
        <ToolSlot $ml={20}><Lens c="#bcbcbc" kind="check" /></ToolSlot>
        <ToolSlot $ml={67}><Refresh /></ToolSlot>
        <ToolSlot $ml={62}><Houses /></ToolSlot>
        <ToolSlot $ml={16}><Eye slash /></ToolSlot>
        <ToolSlot $ml={23}><Eye /></ToolSlot>
        <ToolSlot $ml={62}><DocShare /></ToolSlot>
        <SearchBox><SearchGlyph /></SearchBox>
        <HelpBadge>?</HelpBadge>
      </Toolbar>
      <Main>
        <RedFrame $w={740} $h={1388} $mt={0} $ml={3}>
          <PanelHead $h={36} $pl={13} $pr={16}>
            <PanelTitle>Control Panel</PanelTitle>
            <WindowControls a={0} b={30} c={14} />
          </PanelHead>
          <Segments $w={690} $ml={11} $mt={8}>
            <Segment $w={47} $line><svg width="18" height="22" viewBox="0 0 18 22"><path d="M17 0v22L0 11z" fill="#000" /></svg></Segment>
            <Segment $w={335} $pl={6}><EmMark /><span>EnrichmentMap</span></Segment>
            <Segment $w={308} $on $gap={10} $pl={8}><AaMark /><span>AutoAnnotate</span></Segment>
          </Segments>
          <OuterBox $ml={4} $w={704} $h={1289}>
            <InnerLight>
              <ComboRow>
                <Combo><ComboText>MCL Cluster Annotation Set</ComboText><ComboArrows><ComboChevrons /></ComboArrows></Combo>
                <SmallBtn $ml={29}><FaPlus size={24} /></SmallBtn>
                <SmallBtn $ml={26}><FaSyncAlt size={24} /></SmallBtn>
                <SmallBtn $ml={27}><FaBars size={26} /></SmallBtn>
              </ComboRow>
              <ClusterTable>
                <ClusterHead>
                  <HeadCell $w={398} $line $pl={8}>Cluster</HeadCell>
                  <HeadCell $w={131} $line $pl={7}>Nodes<FaCaretDown size={24} color="#bbb" /></HeadCell>
                  <HeadCell $w={130} $line $pl={9}>Collapsed</HeadCell>
                </ClusterHead>
                <ClusterBody>
                  <ClusterRows>
                    {clusterRows.map(([n, c]) => (
                      <ClusterRow key={n}><ClusterName>{n}</ClusterName><ClusterCount>{c}</ClusterCount></ClusterRow>
                    ))}
                  </ClusterRows>
                  <VScrollTrack><VThumb $w={17} $h={410} /></VScrollTrack>
                </ClusterBody>
              </ClusterTable>
              <Footnote>91 clusters, 0 selected</Footnote>
            </InnerLight>
          </OuterBox>
        </RedFrame>
        <RightArea>
          <TopStack>
            <Center>
              <SplitDot $x={0} $y={693} />
              <SplitDot $x={1145} $y={490} />
              <CanvasBox>
                <Network />
                <Minimap><MiniMap /></Minimap>
              </CanvasBox>
              <NetBar>
                <NetSection $w={147} $pl={23} $line $gap={20}>
                  <FaTh size={44} />
                  <FaShareAltSquare size={44} color={BLUE} />
                </NetSection>
                <NetSection $w={84} $pl={19} $line><FaExternalLinkSquareAlt size={44} /></NetSection>
                <NetSection $w={202} $pl={26} $line><NetName>estrogen_treat...</NetName></NetSection>
                <NetSection $w={86} $pl={23} $line><ExportIcon /></NetSection>
                <NetSection $w={207} $pl={23} $line $gap={19}>
                  <DashedBox c={BLUE}><ellipse cx="15" cy="14" rx="7.5" ry="8" fill={BLUE} /><ellipse cx="26.5" cy="27" rx="7.5" ry="8" fill={BLUE} /></DashedBox>
                  <DashedBox c={BLUE}><path d="M9 15l17 17M13 9l18 18M20 7l13 13" stroke={BLUE} strokeWidth="3.6" /></DashedBox>
                  <DashedBox c="#000">
                    <path d="M9 8h23v17l-8 8H9z" fill="#000" />
                    <path d="M13 13h15M13 18h15" stroke="#eee" strokeWidth="2" /><path d="M23 33v-8h9" fill="#eee" />
                  </DashedBox>
                </NetSection>
                <NetSection $w={316} $pl={13} $line>
                  <StatCell $w={135}><CheckTile /><CountCol><span>0</span><span>0</span></CountCol></StatCell>
                  <ThinDivider />
                  <StatCell $w={134}><StatGlyph><Eye size={28} slash /></StatGlyph><CountCol><span>0</span><span>0</span></CountCol></StatCell>
                </NetSection>
                <NetSection $w={83} $pl={23}><TargetIcon /></NetSection>
              </NetBar>
            </Center>
            <RedFrame $w={475} $h={975} $mt={2} $ml={0}>
              <PanelHead $h={32} $pl={14} $pr={10}>
                <PanelTitle>Results Panel</PanelTitle>
                <WindowControls a={0} b={31} c={15} />
              </PanelHead>
              <Segments $w={351} $ml={53} $mt={10}>
                <Segment $w={351} $on $gap={10}><AaMark /><span>AutoAnnotate Display</span></Segment>
              </Segments>
              <OuterBox $ml={7} $w={442} $h={879}>
                <InnerLight>
                  <ResultsInnerPad>
                    <Group $h={421} $pt={15}>
                      <Row $h={48}>
                        <RowLabel $w={85}>Shape:</RowLabel>
                        <ShapeBtn $on $w={53}><svg width="24" height="26" viewBox="0 0 24 26"><ellipse cx="12" cy="13" rx="9.5" ry="10" fill="none" stroke="#111" strokeWidth="2.6" /></svg></ShapeBtn>
                        <ShapeBtn $ml={16} $w={49}><svg width="24" height="26" viewBox="0 0 24 26"><rect x="2" y="3" width="20" height="20" rx="5" fill="none" stroke="#111" strokeWidth="2.4" /></svg></ShapeBtn>
                      </Row>
                      <Row $h={30} $mt={17}><RowLabel>Border Width</RowLabel><RowValue>3</RowValue></Row>
                      <Row $h={24} $mt={14}><SliderTrack><SliderThumb $pct={22.6} /></SliderTrack></Row>
                      <Row $h={30} $mt={13}><RowLabel>Opacity</RowLabel><RowValue>20%</RowValue></Row>
                      <Row $h={24} $mt={15}><SliderTrack><SliderThumb $pct={20} /></SliderTrack></Row>
                      <Row $h={44} $mt={25}><RowLabel $w={86}>Fill:</RowLabel><ColorBtn><Swatch $c="#ffffc0" $ring /></ColorBtn></Row>
                      <Row $h={44} $mt={20}><RowLabel $w={86}>Border:</RowLabel><ColorBtn><Swatch $c="#404040" $ring /></ColorBtn></Row>
                      <Row $h={26} $mt={19}><Check /><RowLabel>Hide Shapes</RowLabel></Row>
                    </Group>
                    <Group $h={339} $mt={21} $pt={8}>
                      <Row $h={30}><RowLabel>Font Scale</RowLabel><RowValue>50%</RowValue></Row>
                      <Row $h={24} $mt={14}><SliderTrack><SliderThumb $pct={50} /></SliderTrack></Row>
                      <Row $h={26} $mt={28}><Check $on><FaCheck size={14} color="#fff" /></Check><RowLabel>Scale font by cluster size</RowLabel></Row>
                      <Row $h={43} $mt={18}><RowLabel $w={148}>Font Color:</RowLabel><ColorBtn><Swatch $c="#000" /></ColorBtn></Row>
                      <Row $h={26} $mt={19}><Check $on><FaCheck size={14} color="#fff" /></Check><RowLabel>Word Wrap</RowLabel></Row>
                      <Row $h={35} $mt={13}>
                        <RowLabel $w={141}>Wrap Length:</RowLabel><WrapInput>20</WrapInput>
                        <Spinner><svg width="14" height="26" viewBox="0 0 14 26" fill="none" stroke="#333" strokeWidth="1.8"><path d="M2 9l5-6 5 6M2 17l5 6 5-6" /></svg></Spinner>
                      </Row>
                      <Row $h={26} $mt={16}><Check /><RowLabel>Hide Labels</RowLabel></Row>
                    </Group>
                  </ResultsInnerPad>
                </InnerLight>
              </OuterBox>
            </RedFrame>
          </TopStack>
          <Strip><SplitDot $wide $x={806} $y={2} /></Strip>
          <TablePanel>
            <PanelHead $h={38} $pl={11} $pr={22}>
              <PanelTitle>Table Panel</PanelTitle>
              <WindowControls a={0} b={30} c={15} />
            </PanelHead>
            <TableBox>
              <TableTools>
                <ToolPlace $w={31} $ml={26}><FaCog size={31} /></ToolPlace>
                <ToolPlace $w={44} $ml={37}><ColumnsIcon /></ToolPlace>
                <ToolPlace $w={35} $ml={36}><FaPlus size={35} /></ToolPlace>
                <ToolPlace $w={33} $ml={41}><FaRegTrashAlt size={38} /></ToolPlace>
                <ToolPlace $w={41} $ml={40}><MiniTable /></ToolPlace>
                <ToolPlace $w={60} $ml={26}><FxGlyph>f(x)</FxGlyph></ToolPlace>
                <ToolPlace $w={41} $ml={26}><ExportIcon /></ToolPlace>
              </TableTools>
              <DataTable>
                <DataMain>
                  <DataHead>
                    {headCols.map(([t, pl, ic], i) => (
                      <DataHeadCell key={t} $w={colW[i]} $pl={pl} $line={i < 5}>
                        {ic !== null && <IconAt $x={ic}><FaSitemap size={23} color="#bcbcbc" /></IconAt>}
                        {t}
                      </DataHeadCell>
                    ))}
                  </DataHead>
                  <DataRows>
                    {dataRows.map((r) => (
                      <DataRow key={r[0]}>{r.map((c, j) => <DataCell key={j} $w={colW[j]}>{c}</DataCell>)}</DataRow>
                    ))}
                  </DataRows>
                  <HScroll><HThumb /></HScroll>
                </DataMain>
                <DataSide><VThumb $w={18} $h={36} /></DataSide>
              </DataTable>
              <TableTabs>
                <Segment $w={183} $on>Node Table</Segment>
                <Segment $w={181} $line>Edge Table</Segment>
                <Segment $w={228} $line>Network Table</Segment>
                <Segment $w={200} $pl={4}><EmMark /><span>Heat Map</span></Segment>
              </TableTabs>
            </TableBox>
          </TablePanel>
        </RightArea>
      </Main>
      <BottomBar>
        <FootBtn $w={80}><FaCloud size={30} /></FootBtn>
        <FootBtn $w={80} $ml={28}><FaListUl size={30} /></FootBtn>
        <Spacer />
        <FootBtn $w={149}><GreenDot />Memory</FootBtn>
      </BottomBar>
    </Win>
  );
}
